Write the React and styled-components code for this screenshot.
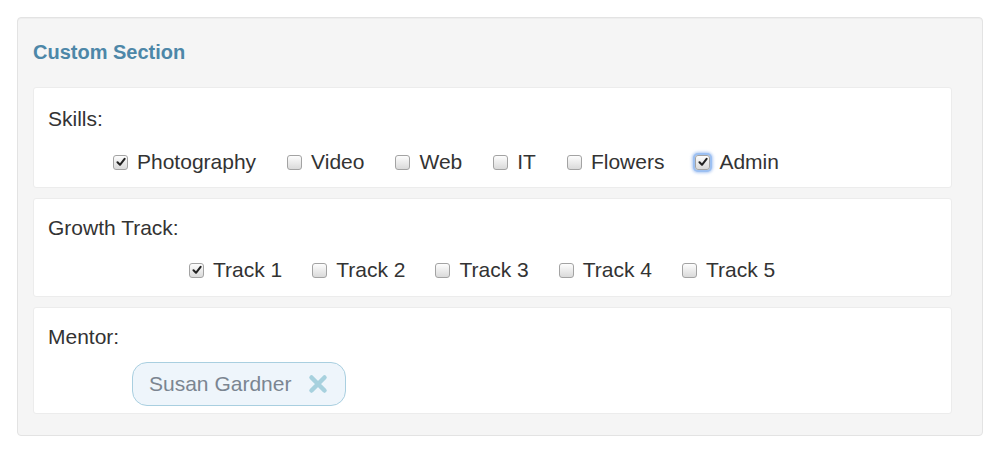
import styled, { createGlobalStyle } from "styled-components";

const GlobalStyle = createGlobalStyle`
  html, body {
    margin: 0;
    padding: 0;
    background: #ffffff;
    font-family: "Liberation Sans", Arial, sans-serif;
    color: #333333;
  }
`;

const Page = styled.div`
  padding: 17px 17px 18px 17px;
`;

const Well = styled.div`
  background: #f5f5f5;
  border: 1px solid #e3e3e3;
  border-radius: 4px;
  box-shadow: inset 0 1px 1px rgba(0, 0, 0, 0.03);
  padding: 22px 30px 21px 15px;
`;

const Title = styled.h3`
  margin: 0 0 23px;
  font-size: 20px;
  line-height: 24px;
  font-weight: 700;
  color: #4d87a8;
`;

const Panels = styled.div`
  display: flex;
  flex-direction: column;
  gap: 10px;
`;

const Panel = styled.div`
  background: #ffffff;
  border: 1px solid #ececec;
  border-radius: 3px;
  padding: ${(p) => p.$top}px 14px ${(p) => p.$bottom}px;
  display: flex;
  flex-direction: column;
  gap: ${(p) => p.$gap}px;
`;

const Label = styled.div`
  font-size: 21px;
  line-height: 24px;
`;

const Options = styled.div`
  display: flex;
  align-items: center;
  gap: ${(p) => p.$spacing}px;
  padding-left: ${(p) => p.$indent}px;
`;

const Option = styled.label`
  display: flex;
  align-items: center;
  gap: 9px;
  font-size: 21px;
  line-height: 24px;
  color: #333333;
`;

const Box = styled.span`
  width: 15px;
  height: 15px;
  box-sizing: border-box;
  border: 1px solid #a3a3a3;
  border-radius: 3px;
  background: linear-gradient(#fdfdfd, #dadada);
  display: flex;
  align-items: center;
  justify-content: center;
  box-shadow: ${(p) =>
    p.$focus ? "0 0 0 2px #9cc0f2, 0 0 3px 3px rgba(120,165,235,0.6)" : "none"};
`;

const Chip = styled.div`
  margin-left: 84px;
  align-self: flex-start;
  display: flex;
  align-items: center;
  gap: 17px;
  height: 44px;
  box-sizing: border-box;
  padding: 0 17px 0 16px;
  border: 1px solid #a9cfe0;
  border-radius: 15px;
  background: #eef5fb;
  font-size: 21px;
  color: #7b8591;
`;

const Check = () => (
  <svg width="10" height="10" viewBox="0 0 10 10">
    <path d="M1.5 5.2 L4 7.8 L8.6 1.8" fill="none" stroke="#222" strokeWidth="2" strokeLinecap="round" strokeLinejoin="round" />
  </svg>
);

const Remove = () => (
  <svg width="20" height="20" viewBox="0 0 20 20">
    <path d="M3.5 3.5 L16.5 16.5 M16.5 3.5 L3.5 16.5" stroke="#a7d1de" strokeWidth="4.5" strokeLinecap="round" />
  </svg>
);

const skills = [
  { name: "Photography", on: true },
  { name: "Video" },
  { name: "Web" },
  { name: "IT" },
  { name: "Flowers" },
  { name: "Admin", on: true, focus: true },
];

const tracks = [
  { name: "Track 1", on: true },
  { name: "Track 2" },
  { name: "Track 3" },
  { name: "Track 4" },
  { name: "Track 5" },
];

const CheckList = ({ items, indent, spacing }) => (
  <Options $indent={indent} $spacing={spacing}>
    {items.map((it) => (
      <Option key={it.name}>
        <Box $focus={it.focus}>{it.on && <Check />}</Box>
        {it.name}
      </Option>
    ))}
  </Options>
);

export default function App() {
  return (
    <>
      <GlobalStyle />
      <Page>
        <Well>
          <Title>Custom Section</Title>
          <Panels>
            <Panel $top={19} $gap={19} $bottom={13}>
              <Label>Skills:</Label>
              <CheckList items={skills} indent={65} spacing={31} />
            </Panel>
            <Panel $top={17} $gap={18} $bottom={14}>
              <Label>Growth Track:</Label>
              <CheckList items={tracks} indent={141} spacing={30} />
            </Panel>
            <Panel $top={17} $gap={13} $bottom={7}>
              <Label>Mentor:</Label>
              <Chip>
                Susan Gardner
                <Remove />
              </Chip>
            </Panel>
          </Panels>
        </Well>
      </Page>
    </>
  );
}
